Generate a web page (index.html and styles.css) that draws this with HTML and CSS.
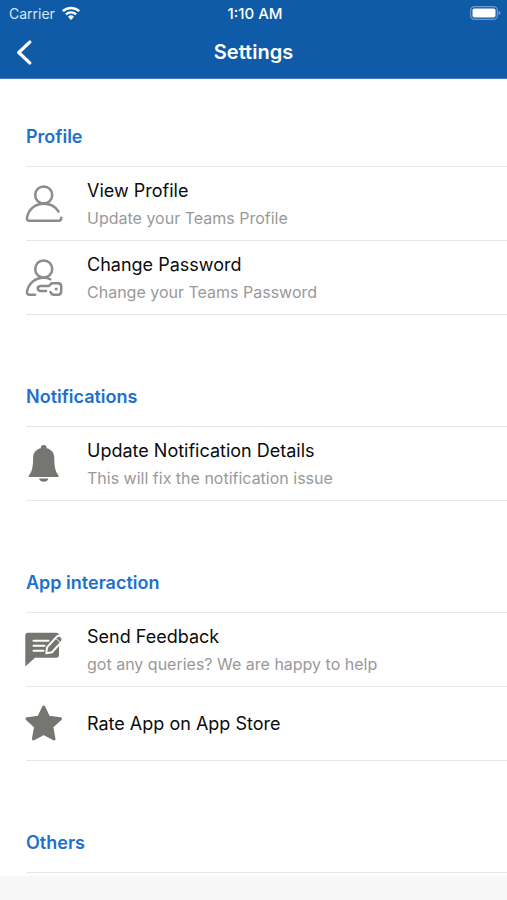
FILE: index.html
```html
<!DOCTYPE html>
<html lang="en">
<head>
<meta charset="utf-8">
<meta name="viewport" content="width=device-width, initial-scale=1">
<title>Settings</title>
<link rel="stylesheet" href="styles.css">
</head>
<body>
<header class="header">
  <div class="status">
    <div class="carrier">
      <span>Carrier</span>
      <svg class="wifi" viewBox="0 0 20 14" aria-hidden="true">
        <path d="M1.8 5.2a12 12 0 0 1 16.4 0" fill="none" stroke="#fff" stroke-width="2.5"/>
        <path d="M4.9 8.4a7.4 7.4 0 0 1 10.2 0" fill="none" stroke="#fff" stroke-width="2.3"/>
        <path d="M10 14l-3-3.2a4.3 4.3 0 0 1 6 0z" fill="#fff"/>
      </svg>
    </div>
    <time class="clock">1:10 AM</time>
    <svg class="battery" viewBox="0 0 31 14" aria-hidden="true">
      <rect x=".7" y=".7" width="26.6" height="12.6" rx="3.6" fill="none" stroke="#6f9acb" stroke-width="1.2"/>
      <rect x="2.5" y="2.5" width="23" height="9" rx="1.8" fill="#fff"/>
      <path d="M28.6 4.8q1.8.7 1.8 2.2t-1.8 2.2z" fill="#7fa6d3"/>
    </svg>
  </div>
  <nav class="navbar">
    <button class="back" type="button" aria-label="Back">
      <svg viewBox="0 0 16 24" aria-hidden="true"><path d="M13.500 2L3 12l10.500 10" fill="none" stroke="#fff" stroke-width="3.200" stroke-linecap="round" stroke-linejoin="round"/></svg>
    </button>
    <h1 class="title">Settings</h1>
  </nav>
</header>

<main class="content">
  <section class="group">
    <h2 class="heading">Profile</h2>
    <a class="row" href="#profile">
      <svg class="icon outline" viewBox="1 0 37 37" aria-hidden="true">
        <circle cx="18.700" cy="10" r="8.500"/>
        <path d="M33.500 26.500C30.500 21.500 25.500 18.700 18.700 18.700C10 18.700 3.500 24.500 2 32.500Q1.500 35.700 4.500 35.700H34Q36.300 35.700 36.300 32.800"/>
      </svg>
      <span class="text"><span class="name">View Profile</span><span class="note">Update your Teams Profile</span></span>
    </a>
    <a class="row" href="#password">
      <svg class="icon outline" viewBox="1 0 37 37" aria-hidden="true">
        <circle cx="18.700" cy="10" r="8.500"/>
        <path d="M25.200 20.300C23.500 19.200 21.500 18.700 18.700 18.700C10 18.700 3.500 24.500 2 32.500Q1.500 35.700 4.500 35.700H10"/>
        <path d="M21 32H15.500Q12.800 31.500 12.800 29.400T15.500 27H24L26.500 24.300H33Q36.200 24.300 36.200 27.500V32.500Q36.200 35.700 33 35.700H29Q26.500 35.700 25.500 33"/>
        <circle class="solid" cx="31.200" cy="30" r="1.500"/>
      </svg>
      <span class="text"><span class="name">Change Password</span><span class="note">Change your Teams Password</span></span>
    </a>
  </section>

  <section class="group">
    <h2 class="heading">Notifications</h2>
    <a class="row" href="#notifications">
      <svg class="icon filled" viewBox="1 0 37 37" aria-hidden="true">
        <path d="M15.700 3.200Q15.700 0 18.700 0T21.700 3.200C27 4.500 29.300 8.300 29.300 13C29.300 22 30.500 27 33.500 30.200Q34.200 32 33 32H4.400Q3.200 32 3.900 30.200C7 27 8.100 22 8.100 13C8.100 8.300 10.400 4.500 15.700 3.200Z"/>
        <path d="M14 33.500H23.400Q22.300 36.700 18.700 36.700T14 33.500Z"/>
      </svg>
      <span class="text"><span class="name">Update Notification Details</span><span class="note">This will fix the notification issue</span></span>
    </a>
  </section>

  <section class="group">
    <h2 class="heading">App interaction</h2>
    <a class="row" href="#feedback">
      <svg class="icon filled" viewBox="1 0 37 37" aria-hidden="true">
        <path d="M2.800 1.700H31.200Q34 1.700 34 4.500V24Q34 26.800 31.200 26.800H10L.3 35.500V4.500Q.3 1.700 2.800 1.700Z"/>
        <path class="cut" d="M8.500 9.700H23.500M8.500 14.700H19.500M8.500 19.700H18.500"/>
        <path class="pencil" d="M21.300 22.200L22 16.300L31.600 5.800Q34 3.600 36.400 5.700Q38.700 8.200 36.700 10.600L27 21.200Z"/>
        <path class="cut thin" d="M31 7.500L35.300 11.500"/>
      </svg>
      <span class="text"><span class="name">Send Feedback</span><span class="note">got any queries? We are happy to help</span></span>
    </a>
    <a class="row" href="#rate">
      <svg class="icon filled" viewBox="1 0 37 37" aria-hidden="true">
        <path class="star" d="M18.700 2L23.600 12.300L35.400 13.800L26.800 21.700L29 33.900L18.700 28.400L8.400 33.900L10.600 21.700L2 13.800L13.800 12.300Z"/>
      </svg>
      <span class="text"><span class="name">Rate App on App Store</span></span>
    </a>
  </section>

  <section class="group">
    <h2 class="heading">Others</h2>
  </section>
</main>
<footer class="bottom"></footer>
</body>
</html>
```
FILE: styles.css
```css
* {
  box-sizing: border-box;
}

body {
  margin: 0;
  height: 100vh;
  display: flex;
  flex-direction: column;
  background: #fff;
  color: #0c0c0c;
  font-family: Inter, "Liberation Sans", sans-serif;
}

.header {
  flex: none;
  background: #105ba7;
  color: #fff;
  border-bottom: 1px solid #3f7dbb;
}

.status {
  display: grid;
  grid-template-columns: 1fr auto 1fr;
  align-items: center;
  height: 26px;
  padding: 0 6px 0 9px;
  font-size: 14px;
}

.carrier {
  display: flex;
  align-items: center;
  gap: 6px;
  color: #d7e5f4;
}

.wifi {
  width: 20px;
  height: 14px;
}

.clock {
  font-size: 15px;
  font-weight: 500;
}

.battery {
  width: 31px;
  height: 14px;
  justify-self: end;
}

.navbar {
  display: grid;
  grid-template-columns: 1fr auto 1fr;
  align-items: center;
  height: 52px;
  padding: 0 14px;
}

.back {
  display: flex;
  justify-self: start;
  padding: 0;
  border: 0;
  background: none;
  cursor: pointer;
}

.back svg {
  width: 20px;
  height: 25px;
}

.title {
  margin: 0;
  font-size: 20px;
  font-weight: 600;
}

.content {
  flex: 1;
  min-height: 0;
  overflow-y: auto;
  scrollbar-width: none;
}

.group {
  padding-left: 26px;
  margin-bottom: 24px;
}

.group:last-child {
  margin-bottom: 0;
}

.heading {
  margin: 0;
  height: 88px;
  padding-top: 46px;
  border-bottom: 1px solid #e6e6e6;
  color: #1d70cd;
  font-size: 18px;
  font-weight: 600;
  line-height: 24px;
}

.row {
  display: flex;
  align-items: center;
  gap: 24px;
  height: 74px;
  border-bottom: 1px solid #e6e6e6;
  color: inherit;
  text-decoration: none;
}

.icon {
  flex: none;
  width: 37px;
  height: 37px;
  overflow: visible;
}

.outline {
  fill: none;
  stroke: #8b8b8b;
  stroke-width: 2.5px;
  stroke-linecap: round;
  stroke-linejoin: round;
}

.solid {
  fill: #8b8b8b;
  stroke: none;
}

.filled {
  fill: #757671;
}

.cut {
  fill: none;
  stroke: #fff;
  stroke-width: 2px;
  stroke-linecap: round;
}

.thin {
  stroke-width: 1px;
}

.pencil {
  stroke: #fff;
  stroke-width: 2px;
  stroke-linejoin: round;
}

.star {
  stroke: #757671;
  stroke-width: 3px;
  stroke-linejoin: round;
}

.text {
  display: flex;
  flex-direction: column;
  gap: 3px;
  padding-top: 1px;
}

.name {
  font-size: 18px;
  line-height: 24px;
}

.note {
  color: #999;
  font-size: 16px;
  line-height: 24px;
}

.bottom {
  flex: none;
  height: 24px;
  background: #f7f7f7;
}
```
